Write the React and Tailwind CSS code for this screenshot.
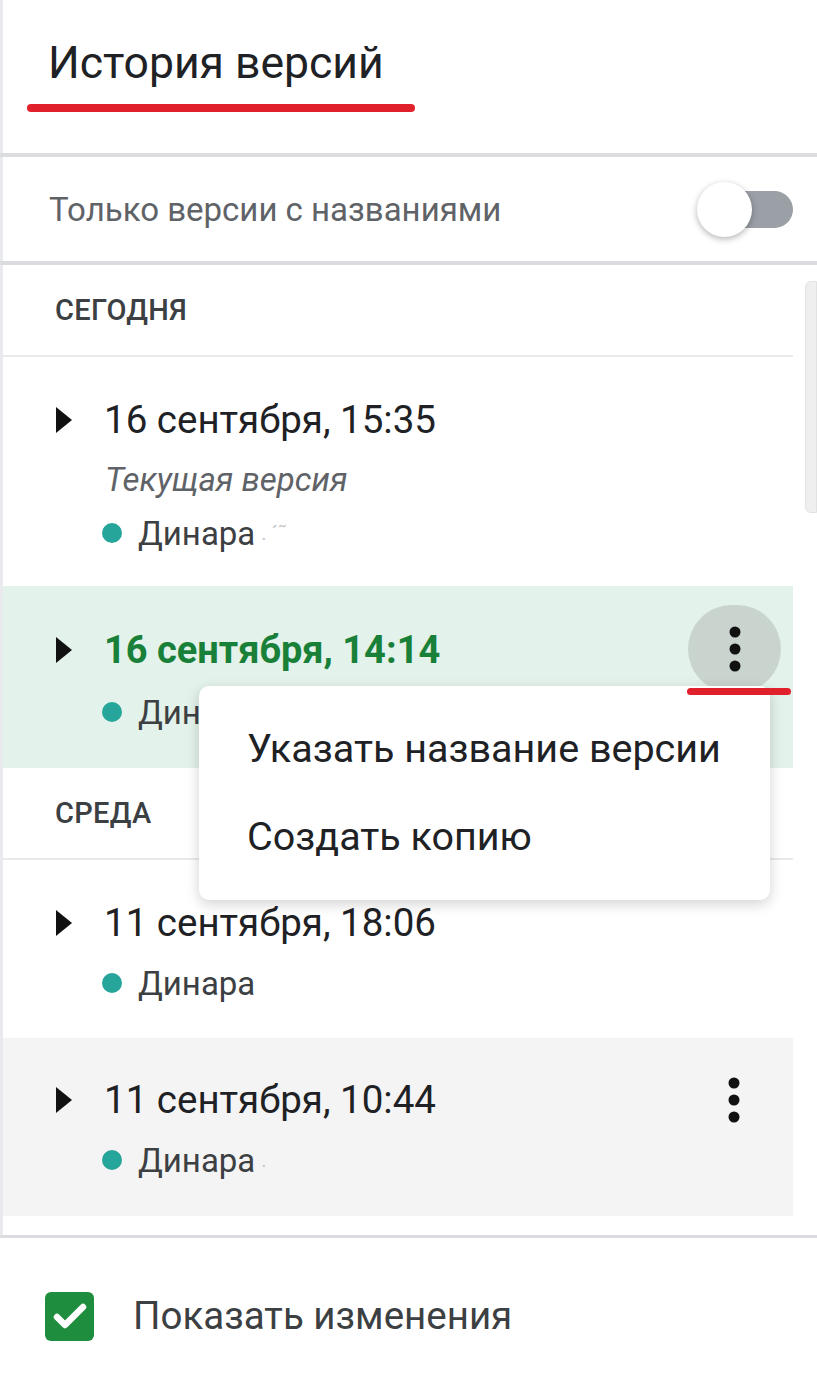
import React from "react";

function Caret() {
  return (
    <svg width="18" height="28" viewBox="0 0 18 28" className="shrink-0">
      <polygon points="1,1 17,14 1,27" fill="#111" />
    </svg>
  );
}

function Kebab() {
  return (
    <svg width="12" height="48" viewBox="0 0 12 48">
      <circle cx="6" cy="7" r="5.5" fill="#111" />
      <circle cx="6" cy="24" r="5.5" fill="#111" />
      <circle cx="6" cy="41" r="5.5" fill="#111" />
    </svg>
  );
}

function Author({ extra }) {
  return (
    <div className="flex items-center h-[40px] pl-[99px]">
      <span className="w-[20px] h-[20px] rounded-full bg-[#26a69a] shrink-0" />
      <span className="ml-[16px] text-[33px] text-[#3c4043] leading-none">Динара</span>
      {extra}
    </div>
  );
}

function ItemTitle({ children, green }) {
  return (
    <div className="flex items-center h-[50px] pl-[52px]">
      <Caret />
      <span
        className={
          green
            ? "ml-[31px] text-[38px] leading-none font-bold text-[#188038]"
            : "ml-[31px] text-[38.5px] leading-none text-[#202124]"
        }
      >
        {children}
      </span>
    </div>
  );
}

export default function App() {
  return (
    <div className="relative w-[817px] h-[1376px] bg-white overflow-hidden font-['Roboto',sans-serif]">
      <div className="border-l-[3px] border-[#e8eaed] h-full flex flex-col">
        {/* Header */}
        <div className="h-[153px] shrink-0 flex flex-col pt-[36px]">
          <div className="pl-[45px] text-[44.5px] leading-[54px] text-[#202124]">История версий</div>
          <div className="ml-[24px] mt-[14px] w-[388px] h-[8px] rounded-full bg-[#e0202b]" />
        </div>
        <div className="h-[4px] bg-[#dadce0] -ml-[3px]" />
        {/* Toggle row */}
        <div className="h-[104px] shrink-0 flex items-center justify-between pl-[46px] pr-[24px]">
          <span className="text-[33px] text-[#5f6368] leading-none">Только версии с названиями</span>
          <div className="relative w-[80px] h-[56px] flex items-center">
            <div className="absolute right-0 w-[70px] h-[37px] rounded-full bg-[#9aa0a6]" />
            <div className="absolute left-[-16px] w-[55px] h-[55px] rounded-full bg-white shadow-[0_2px_6px_rgba(0,0,0,0.3)]" />
          </div>
        </div>
        <div className="h-[4px] bg-[#dadce0] -ml-[3px]" />
        {/* List */}
        <div className="flex-1 flex min-h-0">
          <div className="w-[790px] flex flex-col">
            <div className="h-[92px] flex items-center pl-[52px] border-b-[2px] border-[#e8eaed]">
              <span className="text-[29px] font-medium tracking-[0.3px] text-[#3c4043] leading-none">СЕГОДНЯ</span>
            </div>
            {/* Item 1 */}
            <div className="h-[229px] pt-[38px] flex flex-col">
              <ItemTitle>16 сентября, 15:35</ItemTitle>
              <div className="h-[68px] flex items-center pl-[102px] text-[33px] italic text-[#5f6368] leading-none">
                Текущая версия
              </div>
              <Author extra={<span className="ml-[6px] text-[20px] text-[#c8c8c8] leading-none">. ´˜</span>} />
            </div>
            {/* Item 2 highlighted */}
            <div className="h-[182px] bg-[#e3f2ea] pt-[39px] flex flex-col relative">
              <ItemTitle green>16 сентября, 14:14</ItemTitle>
              <div className="mt-[17px]">
                <Author />
              </div>
              <div className="absolute left-[685px] top-[19px] w-[93px] h-[88px] rounded-full bg-[#c9d4cf] flex items-center justify-center">
                <Kebab />
              </div>
            </div>
            {/* Среда */}
            <div className="h-[92px] flex items-center pl-[52px] border-b-[2px] border-[#e8eaed]">
              <span className="text-[29px] font-medium tracking-[0.3px] text-[#3c4043] leading-none">СРЕДА</span>
            </div>
            {/* Item 3 */}
            <div className="h-[178px] pt-[38px] flex flex-col">
              <ItemTitle>11 сентября, 18:06</ItemTitle>
              <div className="mt-[15px]">
                <Author />
              </div>
            </div>
            {/* Item 4 */}
            <div className="h-[178px] bg-[#f4f4f4] pt-[37px] flex flex-col relative">
              <ItemTitle>11 сентября, 10:44</ItemTitle>
              <div className="mt-[15px]">
                <Author extra={<span className="ml-[6px] text-[20px] text-[#c8c8c8] leading-none">.</span>} />
              </div>
              <div className="absolute left-[685px] top-[16px] w-[92px] h-[92px] rounded-full flex items-center justify-center">
                <Kebab />
              </div>
            </div>
          </div>
          <div className="flex-1 pt-[16px] flex justify-end">
            <div className="w-[12px] h-[232px] rounded-l-[6px] bg-[#efefef] border border-[#e2e2e2]" />
          </div>
        </div>
      </div>
      {/* Footer */}
      <div className="absolute left-0 right-0 bottom-0 h-[141px] bg-white border-t-[3px] border-[#dadce0] flex items-center pl-[45px] pt-[18px]">
        <div className="w-[49px] h-[49px] rounded-[6px] bg-[#1e8e3e] flex items-center justify-center">
          <svg width="36" height="30" viewBox="0 0 36 30">
            <polyline points="5,16 13,24 31,6" fill="none" stroke="#fff" strokeWidth="6.5" strokeLinecap="round" strokeLinejoin="round" />
          </svg>
        </div>
        <span className="ml-[39px] text-[38.5px] text-[#3c4043] leading-none">Показать изменения</span>
      </div>
      {/* Kebab annotation underline */}
      <div className="absolute left-[687px] top-[688px] w-[104px] h-[7px] rounded-full bg-[#e0202b] z-20" />
      {/* Menu */}
      <div className="absolute left-[199px] top-[686px] w-[571px] h-[214px] bg-white rounded-[10px] shadow-[0_4px_14px_rgba(0,0,0,0.18)] flex flex-col justify-center pl-[48px] z-10">
        <div className="h-[88px] flex items-center text-[39.5px] text-[#202124] leading-none">Указать название версии</div>
        <div className="h-[88px] flex items-center text-[39.5px] text-[#202124] leading-none">Создать копию</div>
      </div>
    </div>
  );
}
